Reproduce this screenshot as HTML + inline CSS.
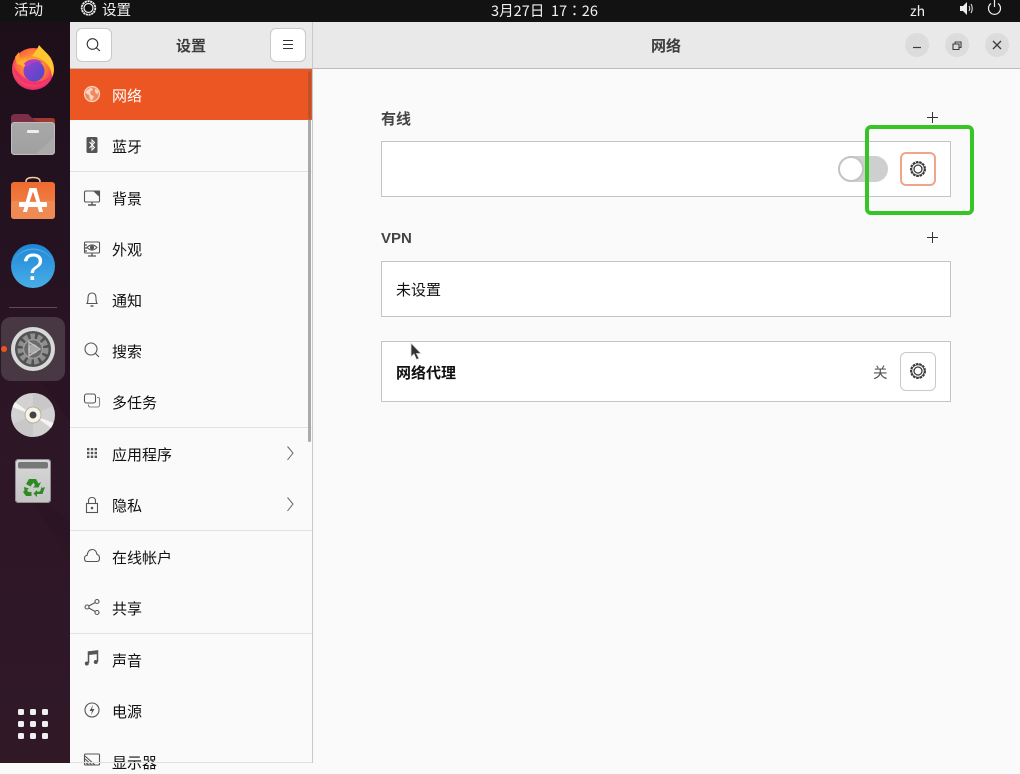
<!DOCTYPE html>
<html><head><meta charset="utf-8">
<style>
html,body{margin:0;padding:0}
body{width:1020px;height:763px;overflow:hidden;position:relative;background:#fafafa;font-family:"Liberation Sans","Noto Sans CJK SC",sans-serif;color:#1a1a1a}
.a{position:absolute;white-space:nowrap}
.top{left:0;top:0;width:1020px;height:22px;background:#121212}
.tt{color:#f0f0f0;font-size:14.500px;line-height:20px;top:0.500px}
.si{left:112px;font-size:15px;line-height:20px;color:#111;margin-top:1px}
.sep{left:70px;width:242px;height:1px;background:#e2e2e2}
.ic{position:absolute;left:82px;width:20px;height:20px;fill:none;stroke:#555;stroke-width:1.100}
.card{background:#fff;border:1px solid #c4c4c4;box-sizing:border-box}
.btn{background:#fff;border:1px solid #c9c9c9;border-radius:6px;box-sizing:border-box}
.wb{width:24px;height:24px;border-radius:50%;background:#dcdcdc;top:33px}
</style></head><body>
<!-- dock -->
<svg class="a" style="left:0;top:22px" width="70" height="741" viewBox="0 0 70 741">
<defs>
<linearGradient id="dk" x1="0" y1="0" x2="0" y2="1"><stop offset="0" stop-color="#1d0f1a"/><stop offset=".45" stop-color="#291424"/><stop offset="1" stop-color="#2e1725"/></linearGradient>
<radialGradient id="ff" cx=".5" cy=".4" r=".65"><stop offset="0" stop-color="#ffbd30"/><stop offset=".55" stop-color="#ff7139"/><stop offset="1" stop-color="#e31587"/></radialGradient>
<linearGradient id="ffp" x1="0" y1="0" x2="1" y2="1"><stop offset="0" stop-color="#9a3fd0"/><stop offset="1" stop-color="#4a4bc9"/></linearGradient>
<linearGradient id="fo" x1="0" y1="0" x2="0" y2="1"><stop offset="0" stop-color="#a8a8a8"/><stop offset="1" stop-color="#a0a0a0"/></linearGradient>
<linearGradient id="ap" x1="0" y1="0" x2="0" y2="1"><stop offset="0" stop-color="#ee6a2e"/><stop offset="1" stop-color="#f08a55"/></linearGradient>
<linearGradient id="hp" x1="0" y1="0" x2="0" y2="1"><stop offset="0" stop-color="#1f86d6"/><stop offset="1" stop-color="#48aee8"/></linearGradient>
<linearGradient id="tr" x1="0" y1="0" x2="0" y2="1"><stop offset="0" stop-color="#d8d8d8"/><stop offset="1" stop-color="#c4c4c4"/></linearGradient>
</defs>
<rect width="70" height="741" fill="url(#dk)"/>
<path d="M0 430L70 540V741H0Z" fill="#331a2b" opacity=".35"/>
<path d="M0 440L70 500V400L0 300Z" fill="#2f1828" opacity=".5"/>
</svg>
<!-- firefox -->
<svg class="a" style="left:11px;top:44px" width="44" height="46" viewBox="0 0 44 46">
<circle cx="22" cy="25" r="21" fill="url(#ff)"/>
<path d="M21 12C24 8 27 4 28 1C31 5 38 10 41 17C44 24 43 30 41 33C41 24 34 14 21 12Z" fill="#ffc82e"/>
<path d="M4 13L8 8L9 14L16 13L14 18L6 21Z" fill="#ff9a2e"/>
<path d="M6 19C10 15 16 15 20 17L13 23Z" fill="#ffb030"/>
<circle cx="23" cy="27" r="10.500" fill="url(#ffp)"/>
<path d="M13 20C16 15 26 13 32 19C26 17 20 18 17 23Z" fill="#b33fc0"/>
<path d="M2 22C4 34 12 41 24 41C30 41 36 38 40 32C34 38 22 40 14 34C8 30 5 26 2 22Z" fill="#f0247c" opacity=".7"/>
</svg>
<!-- files -->
<svg class="a" style="left:11px;top:113px" width="44" height="42" viewBox="0 0 44 42">
<path d="M0 5Q0 1 4 1H17L21 5H41Q44 5 44 8V20H0Z" fill="#7a2f47"/>
<path d="M23 5H41Q44 5 44 8V14L23 7Z" fill="#a0392e"/>
<rect x="0" y="9" width="44" height="33" rx="3.500" fill="url(#fo)"/>
<rect x="0.500" y="9.500" width="43" height="32" rx="3" fill="none" stroke="#bdbdbd"/>
<path d="M43.500 24V38Q43.500 41.500 40 41.500H24Z" fill="#ababab"/>
<rect x="16" y="17" width="12" height="3" rx="1" fill="#eee"/>
</svg>
<!-- app store -->
<svg class="a" style="left:11px;top:176px" width="44" height="43" viewBox="0 0 44 43">
<path d="M15 7V5.500Q15 1.500 22 1.500Q29 1.500 29 5.500V7" fill="none" stroke="#f3c9a4" stroke-width="1.500"/>
<rect x="0" y="6" width="44" height="37" rx="3" fill="url(#ap)"/>
<rect x="0" y="25" width="44" height="18" rx="3" fill="#f08a55"/>
<path d="M18.500 12H25.500L32 36H28L26.500 30H17.500L16 36H12ZM22 15.500L18.500 26H25.500Z" fill="#fff"/>
<rect x="8" y="26" width="28" height="5" rx="1" fill="#fff"/>
</svg>
<!-- help -->
<svg class="a" style="left:11px;top:244px" width="44" height="44" viewBox="0 0 44 44">
<circle cx="22" cy="22" r="22" fill="url(#hp)"/>
<path d="M1 20A22 22 0 0 1 43 20A22 20 0 0 0 1 20Z" fill="#6bbdea" opacity=".6"/>
<text x="22" y="36" font-family="Liberation Sans" font-size="38" fill="#fff" text-anchor="middle">?</text>
</svg>
<div class="a" style="left:9px;top:307px;width:48px;height:1px;background:#5e4a58"></div>
<div class="a" style="left:1px;top:317px;width:64px;height:64px;border-radius:10px;background:#473843"></div>
<div class="a" style="left:1px;top:346px;width:6px;height:6px;border-radius:50%;background:#e9541f"></div>
<!-- settings -->
<svg class="a" style="left:11px;top:327px" width="44" height="44" viewBox="0 0 44 44">
<circle cx="22" cy="22" r="22" fill="#d8d8d8"/>
<circle cx="22" cy="22" r="18" fill="#525252"/>
<circle cx="22" cy="22" r="12.500" fill="none" stroke="#8f8f8f" stroke-width="6" stroke-dasharray="4.500 2.500"/>
<circle cx="22" cy="22" r="9.500" fill="#6a6a6a" stroke="#9a9a9a" stroke-width="1.500"/>
<circle cx="22" cy="22" r="5" fill="#a8a8a8"/>
<path d="M18 15L29 22L18 29Z" fill="none" stroke="#c4c4c4" stroke-width="1.300"/>
</svg>
<!-- cd -->
<svg class="a" style="left:11px;top:393px" width="44" height="44" viewBox="0 0 44 44">
<circle cx="22" cy="22" r="22" fill="#d2d2d2"/>
<path d="M22 22V0A22 22 0 0 1 42 13ZM22 22V44A22 22 0 0 1 2 31Z" fill="#c8c8c8"/>
<path d="M22 22L4 9A22 22 0 0 0 1.500 14ZM22 22L40 35A22 22 0 0 0 42.500 30Z" fill="#f4f4f4"/>
<circle cx="22" cy="22" r="8" fill="#f6f3ea" stroke="#bdb093"/>
<circle cx="22" cy="22" r="3.500" fill="#444"/>
</svg>
<!-- trash -->
<svg class="a" style="left:15px;top:459px" width="36" height="44" viewBox="0 0 36 44">
<rect x="0" y="0" width="36" height="44" rx="3.500" fill="url(#tr)"/>
<rect x=".5" y=".5" width="35" height="43" rx="3" fill="none" stroke="#8f8f8f"/>
<rect x="3" y="3" width="30" height="6.500" rx="2" fill="#777"/>
<g fill="#2e8b22">
<path d="M14 20H21L23.500 24.500L26 23L23.500 28.500H18L20 26.500L18.500 23.500L15.500 27.500L11 25Z"/>
<path d="M27 27L27 29L30 28L27.500 35H22V38L18.500 34.500L22 31V32.500H25Z"/>
<path d="M9 28L14 29.500L12 31L13.500 33H16.500V37H11L8 33L9.500 31.500Z"/>
</g>
</svg>
<svg class="a" style="left:18px;top:709px" width="30" height="30" fill="#f0f0f0">
<rect x="0" y="0" width="6" height="6" rx="1.500"/><rect x="12" y="0" width="6" height="6" rx="1.500"/><rect x="24" y="0" width="6" height="6" rx="1.500"/>
<rect x="0" y="12" width="6" height="6" rx="1.500"/><rect x="12" y="12" width="6" height="6" rx="1.500"/><rect x="24" y="12" width="6" height="6" rx="1.500"/>
<rect x="0" y="24" width="6" height="6" rx="1.500"/><rect x="12" y="24" width="6" height="6" rx="1.500"/><rect x="24" y="24" width="6" height="6" rx="1.500"/>
</svg>

<!-- top bar -->
<div class="a top"></div>
<div class="a tt" style="left:14px">活动</div>
<svg class="a" style="left:80px;top:0" width="17" height="17" viewBox="0 0 17 17" fill="none"><circle cx="8.500" cy="8" r="6.800" stroke="#eee" stroke-width="1.800" stroke-dasharray="2.200 .6"/><circle cx="8.500" cy="8" r="4.500" stroke="#eee" stroke-width="1.200"/></svg>
<div class="a tt" style="left:102px">设置</div>
<div class="a tt" style="left:491px;font-family:'Noto Sans CJK SC',sans-serif;font-size:14.500px;letter-spacing:.05px">3月27日&nbsp; 17<span style="font-family:'Noto Sans CJK TC',sans-serif">：</span>26</div>
<div class="a tt" style="left:910px;font-family:'Noto Sans CJK SC',sans-serif;font-size:14px">zh</div>
<svg class="a" style="left:959px;top:1px" width="16" height="15" viewBox="0 0 16 15"><path d="M1 5H4L8 1V14L4 10H1Z" fill="#eee"/><path d="M10 5Q11.500 7.500 10 10M12 3Q14.500 7.500 12 12" stroke="#ddd" fill="none" stroke-width="1.100"/></svg>
<svg class="a" style="left:987px;top:0" width="15" height="15" viewBox="0 0 15 15" fill="none" stroke="#eee" stroke-width="1.200"><path d="M4 3.500A6 6 0 1 0 11 3.500"/><path d="M7.500 0V7"/></svg>

<!-- header -->
<div class="a" style="left:70px;top:22px;width:950px;height:46px;background:#e9e9e9"></div>
<div class="a" style="left:70px;top:68px;width:950px;height:1px;background:#bdbdbd"></div>
<div class="a" style="left:312px;top:22px;width:1px;height:741px;background:#c9c9c9"></div>
<div class="a btn" style="left:76px;top:28px;width:36px;height:34px"></div>
<svg class="a" style="left:85px;top:36px" width="18" height="17" viewBox="0 0 18 17" fill="none" stroke="#333" stroke-width="1.100"><circle cx="7.500" cy="8" r="5.300"/><path d="M11.300 11.800L15 15"/></svg>
<div class="a" style="left:176px;top:36px;font-size:15px;line-height:22px;font-weight:700;color:#3d3d3d">设置</div>
<div class="a btn" style="left:270px;top:28px;width:36px;height:34px"></div>
<svg class="a" style="left:282px;top:39px" width="13" height="11" stroke="#333" stroke-width="1"><path d="M1 1.500H11M1 5.500H11M1 9.500H11"/></svg>
<div class="a" style="left:651px;top:36px;font-size:15px;line-height:22px;font-weight:700;color:#3d3d3d">网络</div>
<div class="a wb" style="left:905px;"></div>
<div class="a wb" style="left:945px;"></div>
<div class="a wb" style="left:985px;"></div>
<svg class="a" style="left:905px;top:34px" width="104" height="24" fill="none" stroke="#3c3c3c" stroke-width="1.100">
<path d="M8 13.500H16" stroke-width="1.200"/>
<path d="M48 10H54V15.500H48ZM50.200 10V8H56V13.500H54"/>
<path d="M88 7L96 15M96 7L88 15" stroke-width="1.300"/>
</svg>

<!-- sidebar -->
<div class="a" style="left:70px;top:69px;width:242px;height:51px;background:#ec5622"></div>
<div class="a sep" style="top:171px"></div>
<div class="a sep" style="top:427px"></div>
<div class="a sep" style="top:530px"></div>
<div class="a sep" style="top:633px"></div>
<div class="a si" style="top:86px;color:#fff">网络</div>
<div class="a si" style="top:137px">蓝牙</div>
<div class="a si" style="top:189px">背景</div>
<div class="a si" style="top:240px">外观</div>
<div class="a si" style="top:291px">通知</div>
<div class="a si" style="top:342px">搜索</div>
<div class="a si" style="top:393px">多任务</div>
<div class="a si" style="top:445px">应用程序</div>
<div class="a si" style="top:496px">隐私</div>
<div class="a si" style="top:548px">在线帐户</div>
<div class="a si" style="top:599px">共享</div>
<div class="a si" style="top:651px">声音</div>
<div class="a si" style="top:702px">电源</div>
<div class="a si" style="top:753px">显示器</div>

<!-- sidebar icons -->
<svg class="ic" style="top:84px" viewBox="0 0 20 20"><circle cx="10" cy="10" r="7.500" stroke="#fbd3c2" stroke-width="1.200" fill="#f08a5e"/><path d="M4.500 6.500L9 3.500L11 5.500L8 8L9 11L12 12L10 16.500L8 15L7 11L3.500 9ZM13 4.500L16.500 7L15.500 10.500L13 8Z" fill="#fbd3c2" stroke="none"/></svg>
<svg class="ic" style="top:135px" viewBox="0 0 20 20"><rect x="4.500" y="2" width="11" height="16" rx="1.500" fill="#555" stroke="none"/><path d="M7.500 7L12.500 12.500L10 15V5L12.500 7.500L7.500 13" stroke="#fff" stroke-width="1" /></svg>
<svg class="ic" style="top:188px" viewBox="0 0 20 20"><path d="M2.500 4.500Q2.500 3 4 3H17.500V13Q17.500 14 16 14H4Q2.500 14 2.500 13Z"/><path d="M11 3H17.500V9Z" fill="#555" stroke="none"/><path d="M10 14V16.500M6 17H14" stroke-width="1.400"/></svg>
<svg class="ic" style="top:239px" viewBox="0 0 20 20"><rect x="2.500" y="3" width="15" height="11" rx="1"/><path d="M5 8.500Q10 3.500 15 8.500Q10 13.500 5 8.500Z"/><circle cx="10" cy="8.500" r="1.500" fill="#555"/><path d="M10 14V16.500M6 17H14M2.500 6H5M2.500 9H5M2.500 12H5" stroke-width="1.300"/></svg>
<svg class="ic" style="top:289px" viewBox="0 0 20 20"><path d="M5 14.500Q6 13 6 9Q6 4 10 4Q14 4 14 9Q14 13 15 14.500Z"/><path d="M8.500 17H11.500" stroke-width="1.400"/></svg>
<svg class="ic" style="top:340px" viewBox="0 0 20 20"><circle cx="9" cy="9" r="6"/><path d="M13.500 13.500L17 17"/></svg>
<svg class="ic" style="top:391px" viewBox="0 0 20 20"><rect x="2.500" y="3" width="11" height="9" rx="2"/><path d="M15 6.500H16Q17.500 6.500 17.500 8V14Q17.500 16 15.500 16H8Q6.500 16 6.500 14V13.500" stroke="#888"/></svg>
<svg class="ic" style="top:443px" viewBox="0 0 20 20"><g fill="#555" stroke="none"><rect x="5" y="5" width="2.400" height="2.400"/><rect x="8.800" y="5" width="2.400" height="2.400"/><rect x="12.600" y="5" width="2.400" height="2.400"/><rect x="5" y="8.800" width="2.400" height="2.400"/><rect x="8.800" y="8.800" width="2.400" height="2.400"/><rect x="12.600" y="8.800" width="2.400" height="2.400"/><rect x="5" y="12.600" width="2.400" height="2.400"/><rect x="8.800" y="12.600" width="2.400" height="2.400"/><rect x="12.600" y="12.600" width="2.400" height="2.400"/></g></svg>
<svg class="ic" style="top:495px" viewBox="0 0 20 20"><rect x="4.500" y="8.500" width="11" height="9"/><path d="M6.500 8.500V6Q6.500 2.500 10 2.500Q13.500 2.500 13.500 6V8.500"/><circle cx="10" cy="13" r="1.300" fill="#555" stroke="none"/></svg>
<svg class="ic" style="top:545px" viewBox="0 0 20 20"><path d="M5 16.500Q2.500 16.500 2.500 13.500Q2.500 10.500 5 10.500Q6 4.500 10.500 4.500Q14 4.500 15 9.500Q17.500 10 17.500 13Q17.500 16.500 15 16.500Z"/></svg>
<svg class="ic" style="top:597px" viewBox="0 0 20 20"><circle cx="5" cy="10" r="2"/><circle cx="15" cy="4.500" r="2"/><circle cx="15" cy="15.500" r="2"/><path d="M6.800 9L13.200 5.500M6.800 11L13.200 14.500"/></svg>
<svg class="ic" style="top:648px" viewBox="0 0 20 20"><path d="M6.500 15V4L15.500 3V13.500" stroke-width="1.500"/><path d="M6.500 4L15.500 3V5.500L6.500 6.500Z" fill="#555"/><circle cx="4.800" cy="15.500" r="2" fill="#555" stroke="none"/><circle cx="13.800" cy="14" r="2" fill="#555" stroke="none"/></svg>
<svg class="ic" style="top:700px" viewBox="0 0 20 20"><circle cx="10" cy="10" r="7"/><path d="M11 5L7.500 11H10L9 15L12.500 9H10Z" fill="#555" stroke="none"/></svg>
<svg class="ic" style="top:751px" viewBox="0 0 20 20"><rect x="2.500" y="3" width="15" height="11" rx="1"/><path d="M3 5L13 14M3 8L10 14M3 11L7 14"/></svg>

<svg class="a" style="left:285px;top:445px" width="10" height="70" fill="none" stroke="#666" stroke-width="1"><path d="M2.500 1.500L8 8L2.500 15"/><path d="M2.500 52.500L8 59L2.500 66"/></svg>
<div class="a" style="left:308px;top:71px;width:3px;height:371px;border-radius:2px;background:#a9a9a9"></div>
<div class="a" style="left:308px;top:71px;width:3px;height:49px;border-radius:2px;background:#b5542f"></div>
<div class="a" style="left:70px;top:762px;width:242px;height:1px;background:#e0e0e0"></div>

<!-- content -->
<div class="a" style="left:381px;top:110px;font-size:15px;line-height:20px;font-weight:700;color:#444">有线</div>
<svg class="a" style="left:926px;top:111px" width="13" height="13" stroke="#333" stroke-width="1"><path d="M1 6.500H12M6.500 1V12"/></svg>
<div class="a card" style="left:381px;top:141px;width:570px;height:56px"></div>
<div class="a" style="left:838px;top:156px;width:50px;height:26px;border-radius:13px;background:#cfcfcf"></div>
<div class="a" style="left:838px;top:156px;width:26px;height:26px;border-radius:50%;background:#fff;border:2px solid #c4c4c4;box-sizing:border-box"></div>
<div class="a btn" style="left:900px;top:152px;width:36px;height:34px;border:2px solid #eea58a"></div>
<svg class="a" style="left:909px;top:160px" width="18" height="18" viewBox="0 0 18 18" fill="none" stroke="#3a3a3a"><circle cx="9" cy="9" r="7" stroke-width="2" stroke-dasharray="2.500 .9"/><circle cx="9" cy="9" r="6.200" stroke-width=".8"/><circle cx="9" cy="9" r="4" stroke-width="1.300"/></svg>

<div class="a" style="left:381px;top:229px;font-size:15px;line-height:20px;font-weight:700;color:#444">VPN</div>
<svg class="a" style="left:926px;top:231px" width="13" height="13" stroke="#333" stroke-width="1"><path d="M1 6.500H12M6.500 1V12"/></svg>
<div class="a card" style="left:381px;top:261px;width:570px;height:56px"></div>
<div class="a" style="left:396px;top:281px;font-size:15px;line-height:20px;color:#111">未设置</div>

<div class="a card" style="left:381px;top:341px;width:570px;height:61px"></div>
<div class="a" style="left:396px;top:364px;font-size:15px;line-height:20px;font-weight:700;color:#111">网络代理</div>
<div class="a" style="left:873px;top:364px;font-size:14.500px;line-height:20px;color:#555">关</div>
<div class="a btn" style="left:900px;top:352px;width:36px;height:39px"></div>
<svg class="a" style="left:909px;top:362px" width="18" height="18" viewBox="0 0 18 18" fill="none" stroke="#3a3a3a"><circle cx="9" cy="9" r="7" stroke-width="2" stroke-dasharray="2.500 .9"/><circle cx="9" cy="9" r="6.200" stroke-width=".8"/><circle cx="9" cy="9" r="4" stroke-width="1.300"/></svg>

<!-- cursor -->
<svg class="a" style="left:409px;top:342px" width="14" height="20" viewBox="0 0 14 20"><path d="M2 1V15L5 12L7.500 17.500L10 16.500L7.500 11.500H12Z" fill="#333" stroke="#ddd" stroke-width=".8"/></svg>

<!-- green annotation -->
<div class="a" style="left:865px;top:125px;width:109px;height:90px;border:4px solid #36c427;border-radius:6px;box-sizing:border-box"></div>
</body></html>
